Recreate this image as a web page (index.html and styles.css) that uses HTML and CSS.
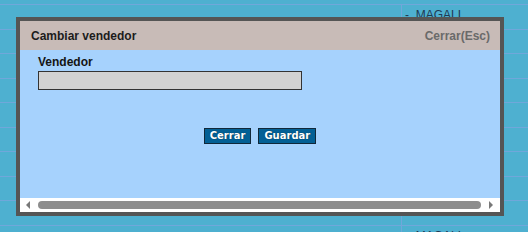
FILE: index.html
```html
<!DOCTYPE html>
<html lang="es">
<head>
    <meta charset="UTF-8">
    <title>Cambiar vendedor</title>
    <link rel="stylesheet" href="styles.css">
</head>
<body>

    <!-- Tabla de fondo -->
    <div class="grid">
        <div class="row"><div class="cell-main"></div><div class="cell-name">-. MAGALI</div></div>
        <div class="row"><div class="cell-main"></div><div class="cell-name">-. MAGALI</div></div>
        <div class="row"><div class="cell-main"></div><div class="cell-name">-. MAGALI</div></div>
        <div class="row"><div class="cell-main"></div><div class="cell-name">-. MAGALI</div></div>
        <div class="row"><div class="cell-main"></div><div class="cell-name">-. MAGALI</div></div>
        <div class="row"><div class="cell-main"></div><div class="cell-name">-. MAGALI</div></div>
        <div class="row"><div class="cell-main"></div><div class="cell-name">-. MAGALI</div></div>
        <div class="row"><div class="cell-main"></div><div class="cell-name">-. MAGALI</div></div>
        <div class="row"><div class="cell-main"></div><div class="cell-name">-. MAGALI</div></div>
        <div class="row"><div class="cell-main"></div><div class="cell-name">-. MAGALI</div></div>
    </div>

    <!-- Ventana modal -->
    <div class="dialog">
        <div class="dialog-header">
            <span class="dialog-title">Cambiar vendedor</span>
            <span class="dialog-close">Cerrar(Esc)</span>
        </div>
        <div class="dialog-body">
            <label class="field-label" for="vendedor">Vendedor</label>
            <input type="text" id="vendedor" class="field-input">
            <div class="actions">
                <button class="btn">Cerrar</button>
                <button class="btn">Guardar</button>
            </div>
        </div>
        <div class="hscroll">
            <span class="arrow-left"></span>
            <span class="thumb"></span>
            <span class="arrow-right"></span>
        </div>
    </div>

</body>
</html>
```

FILE: styles.css
```css
/* General */
body {
    margin: 0;
    font-family: "Liberation Sans", Arial, sans-serif;
    background-color: rgb(78, 176, 208);
    overflow: hidden;
}

/* Background table */
.grid {
    height: 232px;
    padding-top: 4px;
    box-sizing: border-box;
    overflow: hidden;
}

.row {
    display: flex;
    height: 24.5px;
    box-sizing: border-box;
    border-top: 1px solid rgb(112, 167, 218);
}

.cell-main {
    width: 401px;
    border-right: 1px solid rgb(112, 167, 218);
}

.cell-name {
    padding: 3px 0 0 3px;
    font-size: 12px;
    line-height: 14px;
    color: rgb(30, 58, 84);
    white-space: pre;
}

/* Modal window */
.dialog {
    position: absolute;
    top: 17px;
    left: 16px;
    width: 480px;
    border: 4px solid rgb(85, 85, 85);
    background-color: rgb(166, 210, 253);
}

.dialog-header {
    display: flex;
    justify-content: space-between;
    align-items: center;
    height: 29px;
    padding: 0 10px 0 11px;
    background-color: rgb(200, 187, 183);
    font-size: 12px;
    font-weight: bold;
}

.dialog-title {
    color: rgb(28, 28, 28);
}

.dialog-close {
    color: rgb(106, 106, 106);
}

.dialog-body {
    height: 148px;
    box-sizing: border-box;
    padding: 5px 18px 0;
}

.field-label {
    display: block;
    font-size: 12px;
    font-weight: bold;
    line-height: 15px;
    color: rgb(20, 20, 20);
}

.field-input {
    display: block;
    width: 264px;
    height: 19px;
    margin: 1px 0 0;
    padding: 0;
    box-sizing: border-box;
    border: 1px solid rgb(51, 51, 51);
    background-color: rgb(210, 210, 210);
}

.actions {
    display: flex;
    justify-content: center;
    gap: 7px;
    margin: 38px -18px 0;
}

.btn {
    height: 16px;
    padding: 0 5px;
    border: 1px solid rgb(16, 40, 58);
    background-color: rgb(3, 96, 149);
    color: rgb(255, 255, 255);
    font-family: "DejaVu Sans", Verdana, sans-serif;
    font-size: 10px;
    font-weight: bold;
    line-height: 14px;
    text-shadow: 0 0 1px rgba(0, 0, 0, .6);
    cursor: pointer;
}

/* Horizontal scrollbar */
.hscroll {
    display: flex;
    align-items: center;
    height: 14px;
    padding: 0 7px 0 6px;
    background-color: rgb(255, 255, 255);
}

.arrow-left {
    width: 0;
    height: 0;
    border-top: 4px solid transparent;
    border-bottom: 4px solid transparent;
    border-right: 4px solid rgb(120, 120, 120);
}

.arrow-right {
    width: 0;
    height: 0;
    border-top: 4px solid transparent;
    border-bottom: 4px solid transparent;
    border-left: 4px solid rgb(120, 120, 120);
}

.thumb {
    flex: 1;
    height: 8px;
    margin: 0 8px 0 8px;
    border-radius: 4px;
    background-color: rgb(141, 141, 141);
}
```
